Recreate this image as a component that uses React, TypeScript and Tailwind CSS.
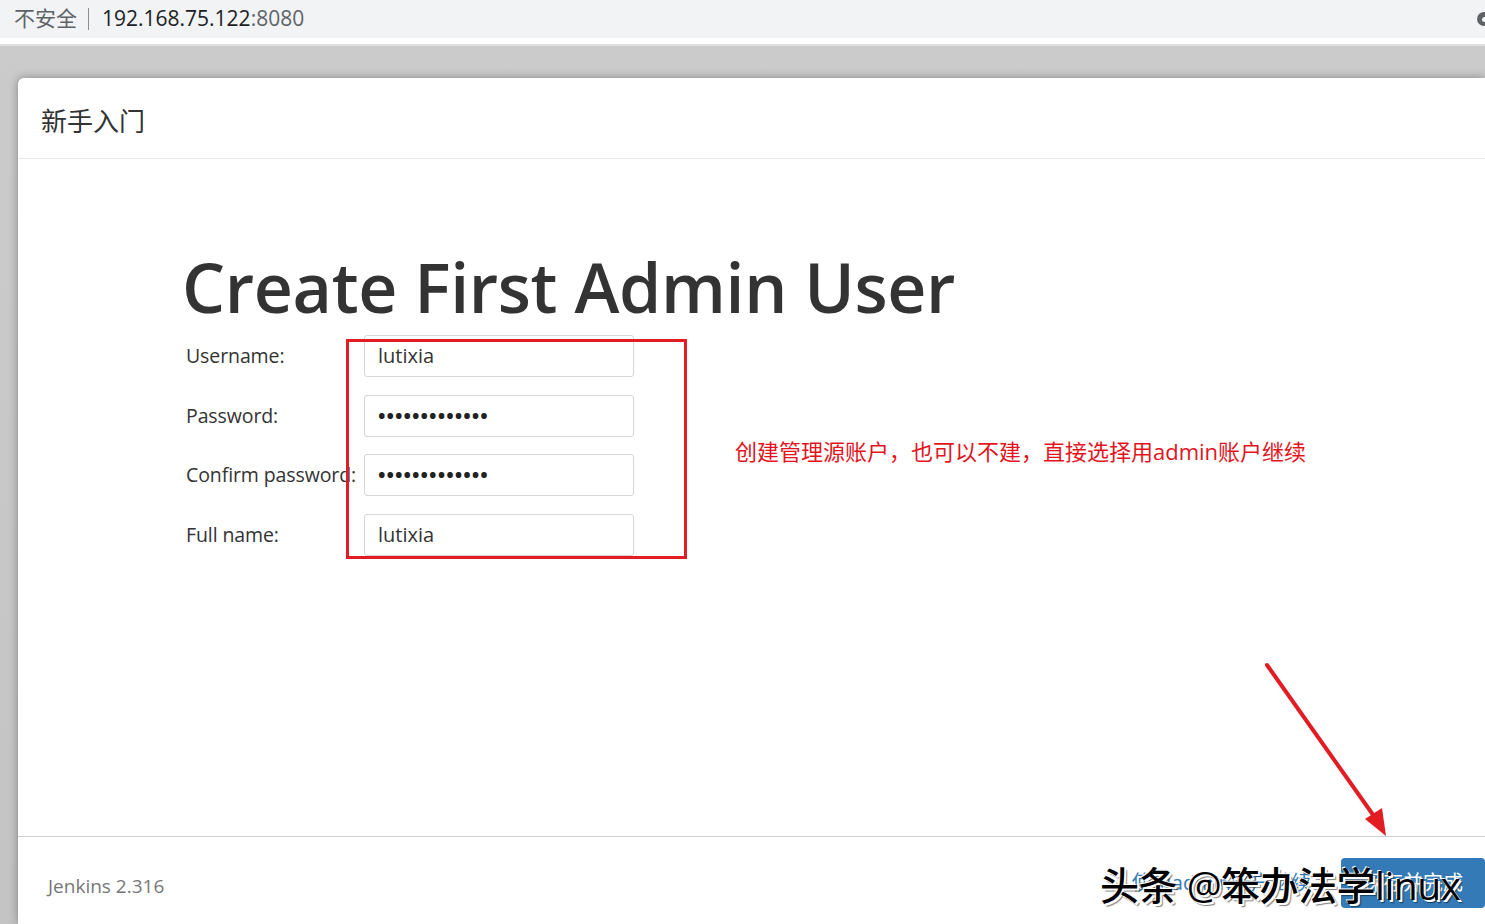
import React from 'react';

const FONT = 'font-["Segoe_UI","Open_Sans","Noto_Sans_CJK_SC",sans-serif]';

const fields = [
  { label: 'Username:', value: 'lutixia', secret: false },
  { label: 'Password:', value: '•••••••••••••', secret: true },
  { label: 'Confirm password:', value: '•••••••••••••', secret: true },
  { label: 'Full name:', value: 'lutixia', secret: false },
];

function AddressBar() {
  return (
    <div className="flex h-[38px] shrink-0 items-center bg-[#f1f3f4] pl-[14px] pr-0 text-[21px]">
      <span className="text-[#5f6368]">不安全</span>
      <span className="ml-[11px] mr-[13px] h-[22px] w-px bg-[#8a8d91]" />
      <span className="text-[#202124]">192.168.75.122</span>
      <span className="text-[#5f6368]">:8080</span>
      <div className="ml-auto mr-[-6px] flex h-[14px] w-[14px] items-center justify-center rounded-full bg-[#5f6368]">
        <div className="h-[5px] w-[5px] rounded-full bg-[#f1f3f4]" />
      </div>
    </div>
  );
}

function Field({ label, value, secret }: { label: string; value: string; secret: boolean }) {
  return (
    <div className="flex h-[42px] items-center">
      <label className="w-[182px] shrink-0 whitespace-nowrap pl-[4px] text-[19.5px] tracking-[-0.1px] text-[#333]">
        {label}
      </label>
      <div className="flex h-[42px] w-[270px] items-center rounded-[3px] border border-[#d6d6d6] bg-white pl-[13px] text-[20px] text-[#333]">
        {secret ? (
          <span className="text-[20px] font-bold tracking-[1px] text-[#222]">{value}</span>
        ) : (
          value
        )}
      </div>
    </div>
  );
}

export default function App() {
  return (
    <div className={`flex h-[924px] w-[1485px] flex-col overflow-hidden bg-[#c6c6c6] ${FONT}`}>
      <AddressBar />
      <div className="h-[6px] shrink-0 bg-white" />
      <div className="h-[2px] shrink-0 bg-[#dedede]" />
      <div className="flex flex-1 flex-col bg-gradient-to-b from-[#cbcbcb] to-[#c4c4c4] pl-[18px] pt-[32px]">
        <div className="flex flex-1 flex-col rounded-tl-[6px] bg-white shadow-[0_0_10px_rgba(0,0,0,0.35)]">
          <header className="flex h-[81px] shrink-0 items-center border-b border-[#e5e5e5] px-[23px] pt-[6px] text-[26px] text-[#333]">
            新手入门
          </header>

          <main className="relative flex-1 pl-[164px] pt-[88px]">
            <h1 className="text-[68px] font-semibold leading-[80px] tracking-[-0.35px] text-[#333]">
              Create First Admin User
            </h1>
            <div className="relative mt-[8px] flex flex-col gap-[17.5px]">
              {fields.map((f) => (
                <Field key={f.label} {...f} />
              ))}
              <div className="absolute left-[164px] top-[4px] h-[220px] w-[341px] border-[3px] border-[#e31b23]" />
            </div>

            <p className="absolute left-[717px] top-[276px] text-[22px] tracking-[0px] text-[#e3141d]">
              创建管理源账户，也可以不建，直接选择用admin账户继续
            </p>

            <svg
              className="absolute left-[1240px] top-[500px]"
              width="140"
              height="185"
              viewBox="0 0 140 185"
            >
              <line x1="9" y1="6" x2="118" y2="160" stroke="#e31b23" strokeWidth="4" strokeLinecap="round" />
              <polygon points="128,177 107,160 124,149" fill="#e31b23" />
            </svg>
          </main>

          <footer className="relative flex h-[88px] shrink-0 items-center border-t border-[#cfcfcf] pl-[30px]">
            <span className="mt-[12px] text-[19px] text-[#777]">Jenkins 2.316</span>
            <div className="ml-auto flex items-center gap-[30px] pt-[4px]">
              <a className="text-[20px] text-[#337ab7]">使用admin账户继续</a>
              <button className="h-[50px] w-[144px] rounded-[4px] bg-[#337ab7] text-[20px] text-white">
                保存并完成
              </button>
            </div>
            <div className="pointer-events-none absolute left-[1082px] top-[19px] text-[39px] font-medium tracking-[-0.5px] text-black [text-shadow:2px_2px_0_#fff,-1px_-1px_0_#fff,3px_3px_1px_rgba(0,0,0,0.5)]">
              头条 @笨办法学linux
            </div>
          </footer>
        </div>
      </div>
    </div>
  );
}
